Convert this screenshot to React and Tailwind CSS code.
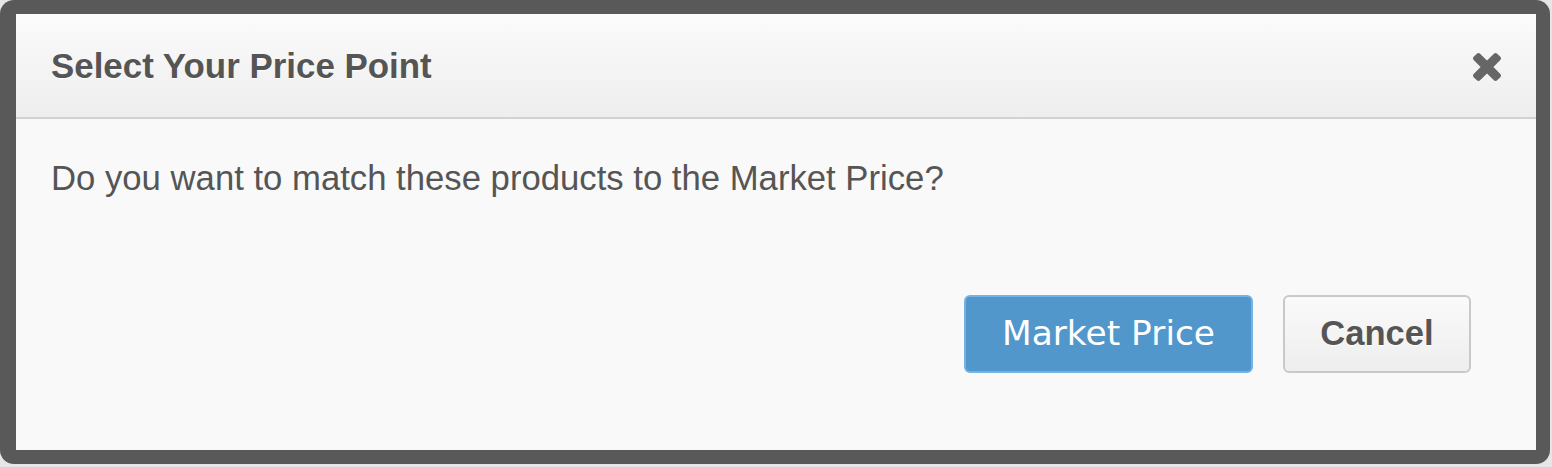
export default function App() {
    return (
        <div className="w-[1552px] h-[467px] bg-[#e6e6e6] font-['Liberation_Sans',Arial,sans-serif]">
            {/* Modal frame */}
            <div className="w-[1550px] h-[464px] rounded-[14px] bg-[#595959] pl-[16px] pt-[14px] pr-[14px] pb-[14px] flex flex-col">
                <div className="flex-1 flex flex-col bg-[#f9f9f9]">
                    {/* Header */}
                    <div className="h-[105px] flex items-center justify-between pl-[35px] pr-[35px] border-b-2 border-[#d2d2d2] bg-gradient-to-b from-[#fbfbfb] to-[#eeeeee]">
                        <h3 className="text-[34.9px] mt-[2px] font-bold text-[#555555] [text-shadow:0_1px_0_#ffffff]">
                            Select Your Price Point
                        </h3>
                        <button className="w-[28px] h-[28px] mt-[3px] blur-[0.4px]">
                            <svg viewBox="110 366 1188 1188" className="w-[28px] h-[28px]" fill="#666666">
                                <path d="M1298 1322q0 40-28 68l-136 136q-28 28-68 28t-68-28l-294-294-294 294q-28 28-68 28t-68-28l-136-136q-28-28-28-68t28-68l294-294-294-294q-28-28-28-68t28-68l136-136q28-28 68-28t68 28l294 294 294-294q28-28 68-28t68 28l136 136q28 28 28 68t-28 68l-294 294 294 294q28 28 28 68z"/>
                            </svg>
                        </button>
                    </div>

                    {/* Body */}
                    <div className="pl-[35px] pt-[39px]">
                        <p className="text-[34.7px] leading-[40px] text-[#555555]">
                            Do you want to match these products to the Market Price?
                        </p>
                    </div>

                    {/* Footer buttons */}
                    <div className="flex justify-end gap-[30px] pr-[65px] mt-[97px]">
                        <button className="w-[289px] h-[78px] rounded-[6px] bg-[#5197cc] border-2 border-[#73b3e3] text-white text-[34.4px] font-['DejaVu_Sans',Verdana,sans-serif]">
                            Market Price
                        </button>
                        <button className="w-[188px] h-[78px] rounded-[6px] border-2 border-[#c9c9c9] bg-gradient-to-b from-[#fafafa] to-[#eeeeee] text-[34.6px] font-bold text-[#555555] [text-shadow:0_1px_0_#ffffff]">
                            Cancel
                        </button>
                    </div>
                </div>
            </div>
        </div>
    );
}
